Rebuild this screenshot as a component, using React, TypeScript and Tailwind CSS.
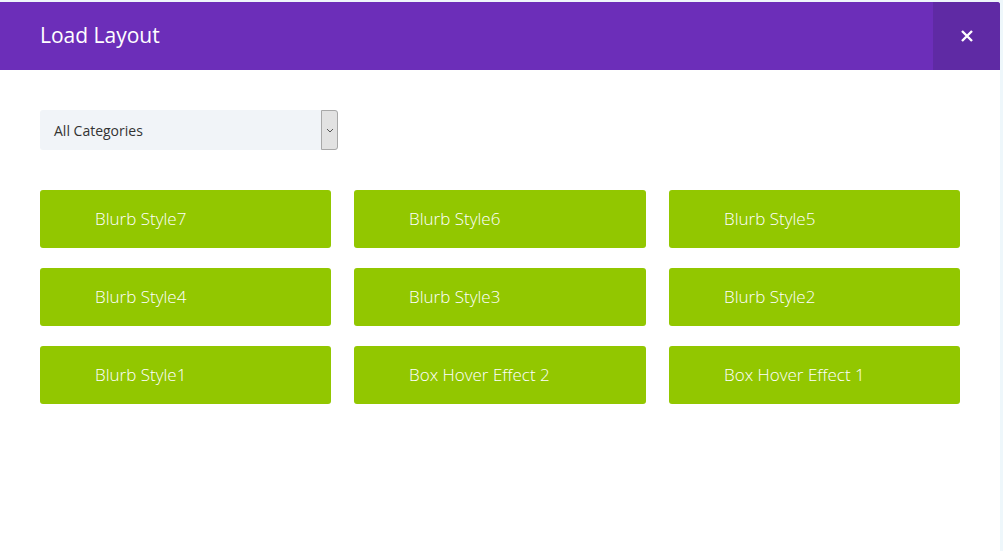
export default function App() {
  const items = ["Blurb Style7","Blurb Style6","Blurb Style5","Blurb Style4","Blurb Style3","Blurb Style2","Blurb Style1","Box Hover Effect 2","Box Hover Effect 1"];
  return (
    <div className="w-[1003px] h-[551px] bg-[#eef7fb] pt-[2px] flex" style={{fontFamily: '"Open Sans", sans-serif'}}>
      <div className="w-[1000px] h-[549px] bg-white flex flex-col rounded-tr-[3px] overflow-hidden">
        <div className="h-[68px] bg-[#6c2eb9] flex items-center shrink-0">
          <div className="flex-1 pl-[40px] text-white text-[21px]">Load Layout</div>
          <div className="w-[67px] h-full bg-[#5f2aa4] flex items-center justify-center text-white">
            <svg width="12" height="12" viewBox="0 0 12 12"><path d="M1 1L11 11M11 1L1 11" stroke="white" strokeWidth="2.4"/></svg>
          </div>
        </div>
        <div className="px-[40px] pt-[40px]">
          <div className="w-[298px] h-[40px] bg-[#f1f4f8] rounded-[3px] flex items-center relative">
            <span className="pl-[14px] text-[14px] text-[#333]">All Categories</span>
            <div className="absolute right-0 top-0 w-[17px] h-[40px] bg-[#e2e2e2] border border-[#a8a8a8] rounded-r-[3px] flex items-center justify-center">
              <svg width="8" height="5" viewBox="0 0 8 5"><path d="M1 1L4 4L7 1" stroke="#555" fill="none"/></svg>
            </div>
          </div>
          <div className="grid grid-cols-[291px_292px_291px] gap-x-[23px] gap-y-[20px] mt-[40px]">
            {items.map(t => (
              <div key={t} className="h-[58px] bg-[#92c700] rounded-[3px] flex items-center pl-[55px] text-white text-[17px] font-light">{t}</div>
            ))}
          </div>
        </div>
      </div>
    </div>
  );
}
